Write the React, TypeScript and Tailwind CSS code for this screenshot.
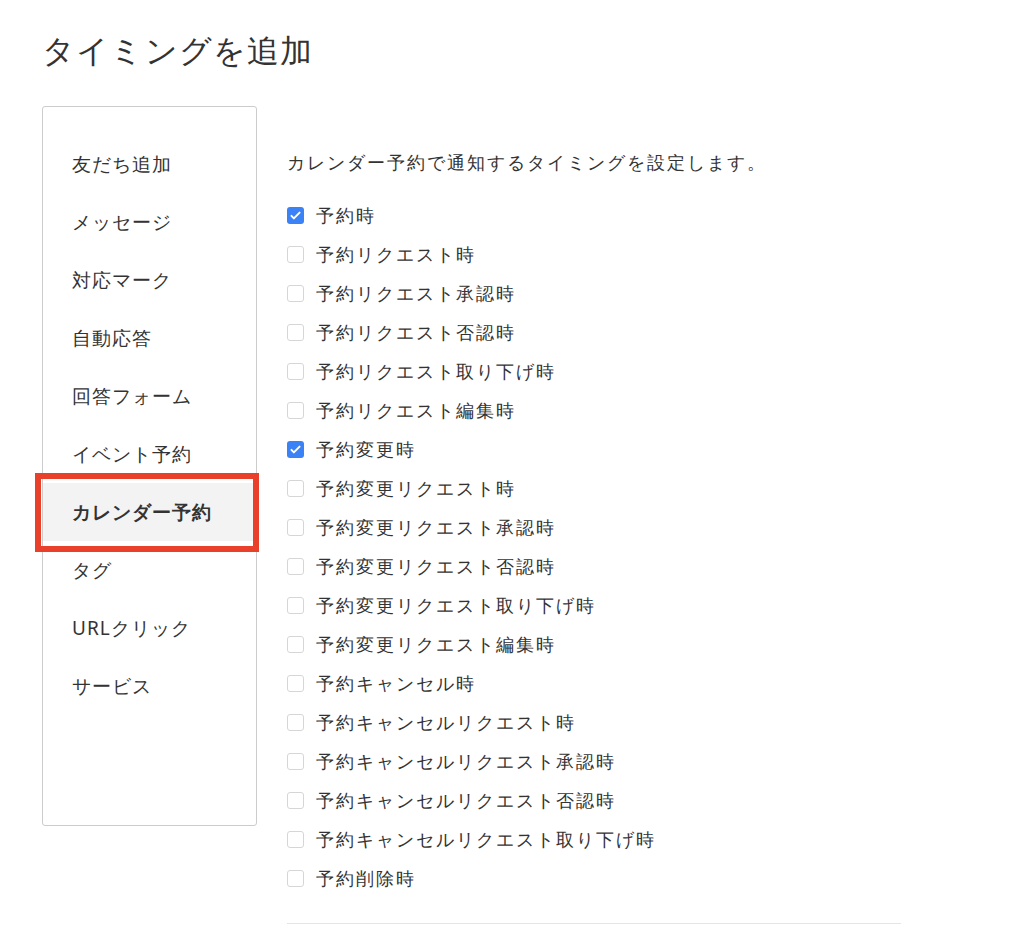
import React from 'react';

const menu = ['友だち追加', 'メッセージ', '対応マーク', '自動応答', '回答フォーム', 'イベント予約', 'カレンダー予約', 'タグ', 'URLクリック', 'サービス'];

const options: [string, boolean][] = [
  ['予約時', true],
  ['予約リクエスト時', false],
  ['予約リクエスト承認時', false],
  ['予約リクエスト否認時', false],
  ['予約リクエスト取り下げ時', false],
  ['予約リクエスト編集時', false],
  ['予約変更時', true],
  ['予約変更リクエスト時', false],
  ['予約変更リクエスト承認時', false],
  ['予約変更リクエスト否認時', false],
  ['予約変更リクエスト取り下げ時', false],
  ['予約変更リクエスト編集時', false],
  ['予約キャンセル時', false],
  ['予約キャンセルリクエスト時', false],
  ['予約キャンセルリクエスト承認時', false],
  ['予約キャンセルリクエスト否認時', false],
  ['予約キャンセルリクエスト取り下げ時', false],
  ['予約削除時', false],
];

export default function App() {
  return (
    <div className="w-[1010px] h-[925px] overflow-hidden bg-white text-[#333] font-['Noto_Sans_CJK_JP','Noto_Sans',sans-serif]">
      <h1 className="pl-[42px] pt-[26px] text-[32px] leading-[48px] font-normal tracking-[1.2px]">タイミングを追加</h1>
      <div className="flex mt-[32px]">
        <div className="ml-[42px] w-[215px] h-[720px] border border-[#ccc] rounded-[3px] pt-[28px]">
          {menu.map((m) => {
            const active = m === 'カレンダー予約';
            return (
              <div key={m} className={`relative h-[58px] flex items-center pl-[29px] text-[19px] tracking-[1px] ${active ? 'bg-[#f3f3f3] font-bold' : ''}`}>
                {m}
                {active && (
                  <div className="absolute left-[-8px] right-[-3px] top-[-10px] bottom-[-11px] border-[6px] border-[#e8402a]" />
                )}
              </div>
            );
          })}
        </div>
        <div className="ml-[30px] w-[614px] tracking-[2px]">
          <p className="mt-[42px] text-[18px] leading-[28px]">カレンダー予約で通知するタイミングを設定します。</p>
          <div className="mt-[20px]">
            {options.map(([label, checked]) => (
              <div key={label} className="h-[39px] flex items-center text-[18px]">
                {checked ? (
                  <span className="w-[17px] h-[17px] rounded-[3px] bg-[#3b82f6] flex items-center justify-center">
                    <svg viewBox="0 0 16 16" className="w-[13px] h-[13px]" fill="none" stroke="white" strokeWidth="2.4" strokeLinecap="round" strokeLinejoin="round">
                      <path d="M3 8.5l3 3 7-7" />
                    </svg>
                  </span>
                ) : (
                  <span className="w-[17px] h-[17px] rounded-[3px] border border-[#d6d6d6] bg-white" />
                )}
                <span className="ml-[12px]">{label}</span>
              </div>
            ))}
          </div>
          <div className="mt-[25px] border-t border-[#e5e5e5]" />
        </div>
      </div>
    </div>
  );
}
